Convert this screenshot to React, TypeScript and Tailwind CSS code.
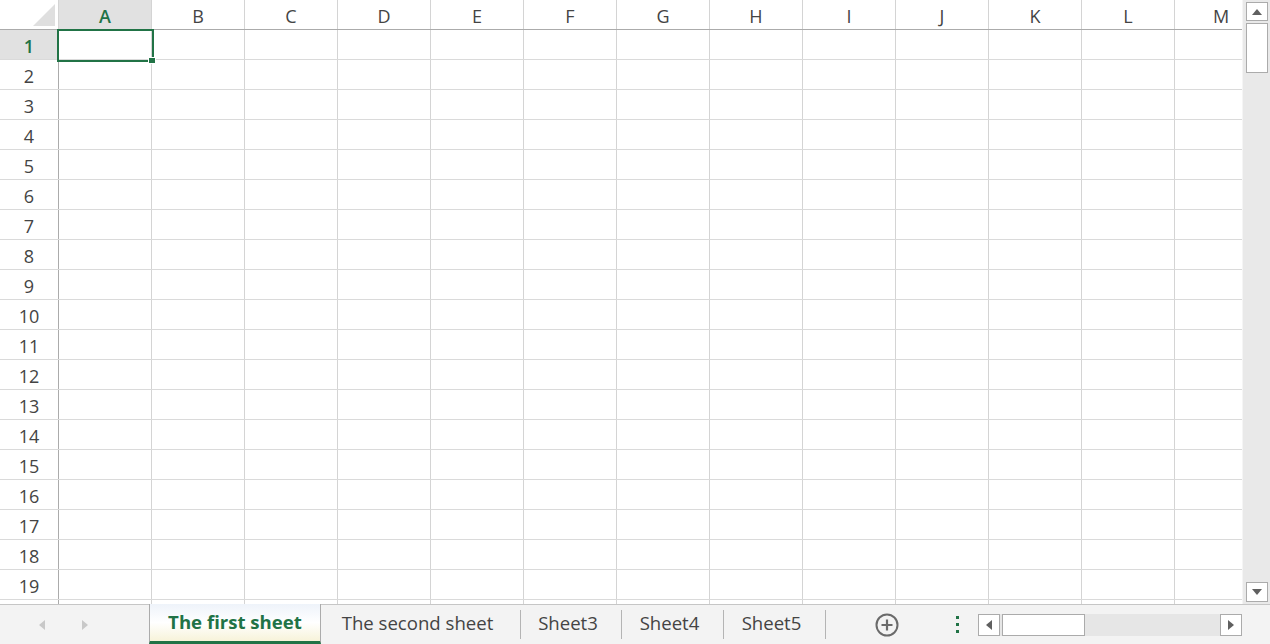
import React from 'react';

const COLS = ['A', 'B', 'C', 'D', 'E', 'F', 'G', 'H', 'I', 'J', 'K', 'L', 'M'];
const ROWS = Array.from({ length: 19 }, (_, i) => i + 1);
const TABS = [
    { name: 'The second sheet', w: 'w-[200px]' },
    { name: 'Sheet3', w: 'w-[101px]' },
    { name: 'Sheet4', w: 'w-[102px]' },
    { name: 'Sheet5', w: 'w-[102px]' },
];

function Tri({ dir, className }: { dir: 'up' | 'down' | 'left' | 'right'; className?: string }) {
    const pts = {
        up: '0,6 5,0 10,6',
        down: '0,0 10,0 5,6',
        left: '6,0 6,10 0,5',
        right: '0,0 0,10 6,5',
    }[dir];
    const vb = dir === 'up' || dir === 'down' ? '0 0 10 6' : '0 0 6 10';
    const size = dir === 'up' || dir === 'down' ? 'w-[10px] h-[6px]' : 'w-[6px] h-[10px]';
    return (
        <svg viewBox={vb} className={`${size} ${className ?? ''}`}>
            <polygon points={pts} fill="currentColor" />
        </svg>
    );
}

function Grid() {
    return (
        <div className="relative flex-1 flex flex-col overflow-hidden">
            {/* Column headers */}
            <div className="flex h-[30px] shrink-0 border-b border-[#ababab]">
                <div className="relative w-[59px] shrink-0 border-r border-[#d4d4d4]">
                    <svg viewBox="0 0 22 22" className="absolute right-[3px] bottom-[3px] w-[22px] h-[22px]">
                        <polygon points="0,22 22,22 22,0" fill="#dfdfdf" />
                    </svg>
                </div>
                {COLS.map(c => (
                    <div
                        key={c}
                        className={`w-[93px] shrink-0 flex items-center justify-center pt-[3px] border-r border-[#d4d4d4] text-[18px] ${c === 'A' ? 'bg-[#e1e1e1] text-[#217346] font-semibold' : 'text-[#444]'}`}
                    >
                        {c}
                    </div>
                ))}
            </div>

            {/* Rows */}
            {ROWS.map(r => (
                <div key={r} className="flex h-[30px] shrink-0 border-b border-[#dadada]">
                    <div
                        className={`w-[59px] shrink-0 flex items-center justify-center pt-[3px] border-r border-[#ababab] text-[18px] ${r === 1 ? 'bg-[#e1e1e1] text-[#217346] font-semibold' : 'text-[#444]'}`}
                    >
                        {r}
                    </div>
                    {COLS.map(c => (
                        <div key={c} className="w-[93px] shrink-0 border-r border-[#d4d4d4]" />
                    ))}
                </div>
            ))}

            {/* Partially visible row below 19 */}
            <div className="flex flex-1">
                <div className="w-[59px] shrink-0 border-r border-[#ababab]" />
                {COLS.map(c => (
                    <div key={c} className="w-[93px] shrink-0 border-r border-[#d4d4d4]" />
                ))}
            </div>

            {/* Selected cell A1 */}
            <div className="absolute left-[57px] top-[29px] w-[97px] h-[33px] border-2 border-[#217346]" />
            <div className="absolute left-[148px] top-[57px] w-[8px] h-[7px] bg-[#217346] border border-white" />
        </div>
    );
}

function VScroll() {
    return (
        <div className="w-[28px] shrink-0 bg-[#e9e9e9] border-l border-[#f5f5f5] flex flex-col items-center py-[2px]">
            <div className="w-[22px] h-[19px] bg-white border border-[#ababab] flex items-center justify-center text-[#606060]">
                <Tri dir="up" />
            </div>
            <div className="w-[22px] h-[50px] mt-[2px] bg-white border border-[#ababab]" />
            <div className="flex-1" />
            <div className="w-[22px] h-[20px] bg-white border border-[#ababab] flex items-center justify-center text-[#606060]">
                <Tri dir="down" />
            </div>
        </div>
    );
}

function BottomBar() {
    return (
        <div className="h-[40px] shrink-0 flex bg-[#f3f3f3] border-t border-[#c6c6c6]">
            {/* Sheet nav arrows */}
            <div className="w-[149px] shrink-0 flex items-center text-[#c8c8c8]">
                <Tri dir="left" className="ml-[39px]" />
                <Tri dir="right" className="ml-[37px]" />
            </div>

            {/* Active tab */}
            <div className="-mt-px w-[172px] shrink-0 flex items-center justify-center border-x border-[#ababab] border-b-[3px] border-b-[#217346] bg-gradient-to-b from-[#eef3fa] via-white to-[#f7f3d9] pb-[1px] text-[18.6px] font-bold text-[#217346]">
                The first sheet
            </div>

            {/* Other tabs */}
            {TABS.map(t => (
                <div key={t.name} className={`${t.w} flex items-center shrink-0`}>
                    <span className="flex-1 text-center pr-[6px] pb-[3px] text-[18.6px] text-[#444]">{t.name}</span>
                    <span className="w-px h-[29px] bg-[#b4b4b4]" />
                </div>
            ))}

            {/* Add sheet */}
            <div className="w-[122px] shrink-0 flex items-center justify-center">
                <svg viewBox="0 0 24 24" className="w-[24px] h-[24px]">
                    <circle cx="12" cy="12" r="10.5" fill="none" stroke="#6a6a6a" strokeWidth="2" />
                    <path d="M12 6.5v11M6.5 12h11" stroke="#6a6a6a" strokeWidth="2.2" />
                </svg>
            </div>

            {/* Splitter dots */}
            <div className="w-[30px] shrink-0 flex flex-col justify-center gap-[4px] pl-[8px]">
                <span className="w-[3px] h-[3px] bg-[#217346]" />
                <span className="w-[3px] h-[3px] bg-[#217346]" />
                <span className="w-[3px] h-[3px] bg-[#217346]" />
            </div>

            {/* Horizontal scrollbar */}
            <div className="w-[264px] shrink-0 flex items-center">
                <div className="flex-1 h-[22px] flex bg-[#e6e6e6]">
                    <div className="w-[22px] bg-white border border-[#ababab] flex items-center justify-center text-[#606060]">
                        <Tri dir="left" />
                    </div>
                    <div className="w-[83px] ml-[2px] bg-white border border-[#ababab]" />
                    <div className="flex-1" />
                    <div className="w-[22px] bg-white border border-[#ababab] flex items-center justify-center text-[#606060]">
                        <Tri dir="right" />
                    </div>
                </div>
            </div>
            <div className="flex-1" />
        </div>
    );
}

export default function App() {
    return (
        <div className="w-[1270px] h-[644px] flex flex-col bg-white overflow-hidden font-['Open_Sans',sans-serif]">
            <div className="flex-1 flex min-h-0">
                <Grid />
                <VScroll />
            </div>
            <BottomBar />
        </div>
    );
}
